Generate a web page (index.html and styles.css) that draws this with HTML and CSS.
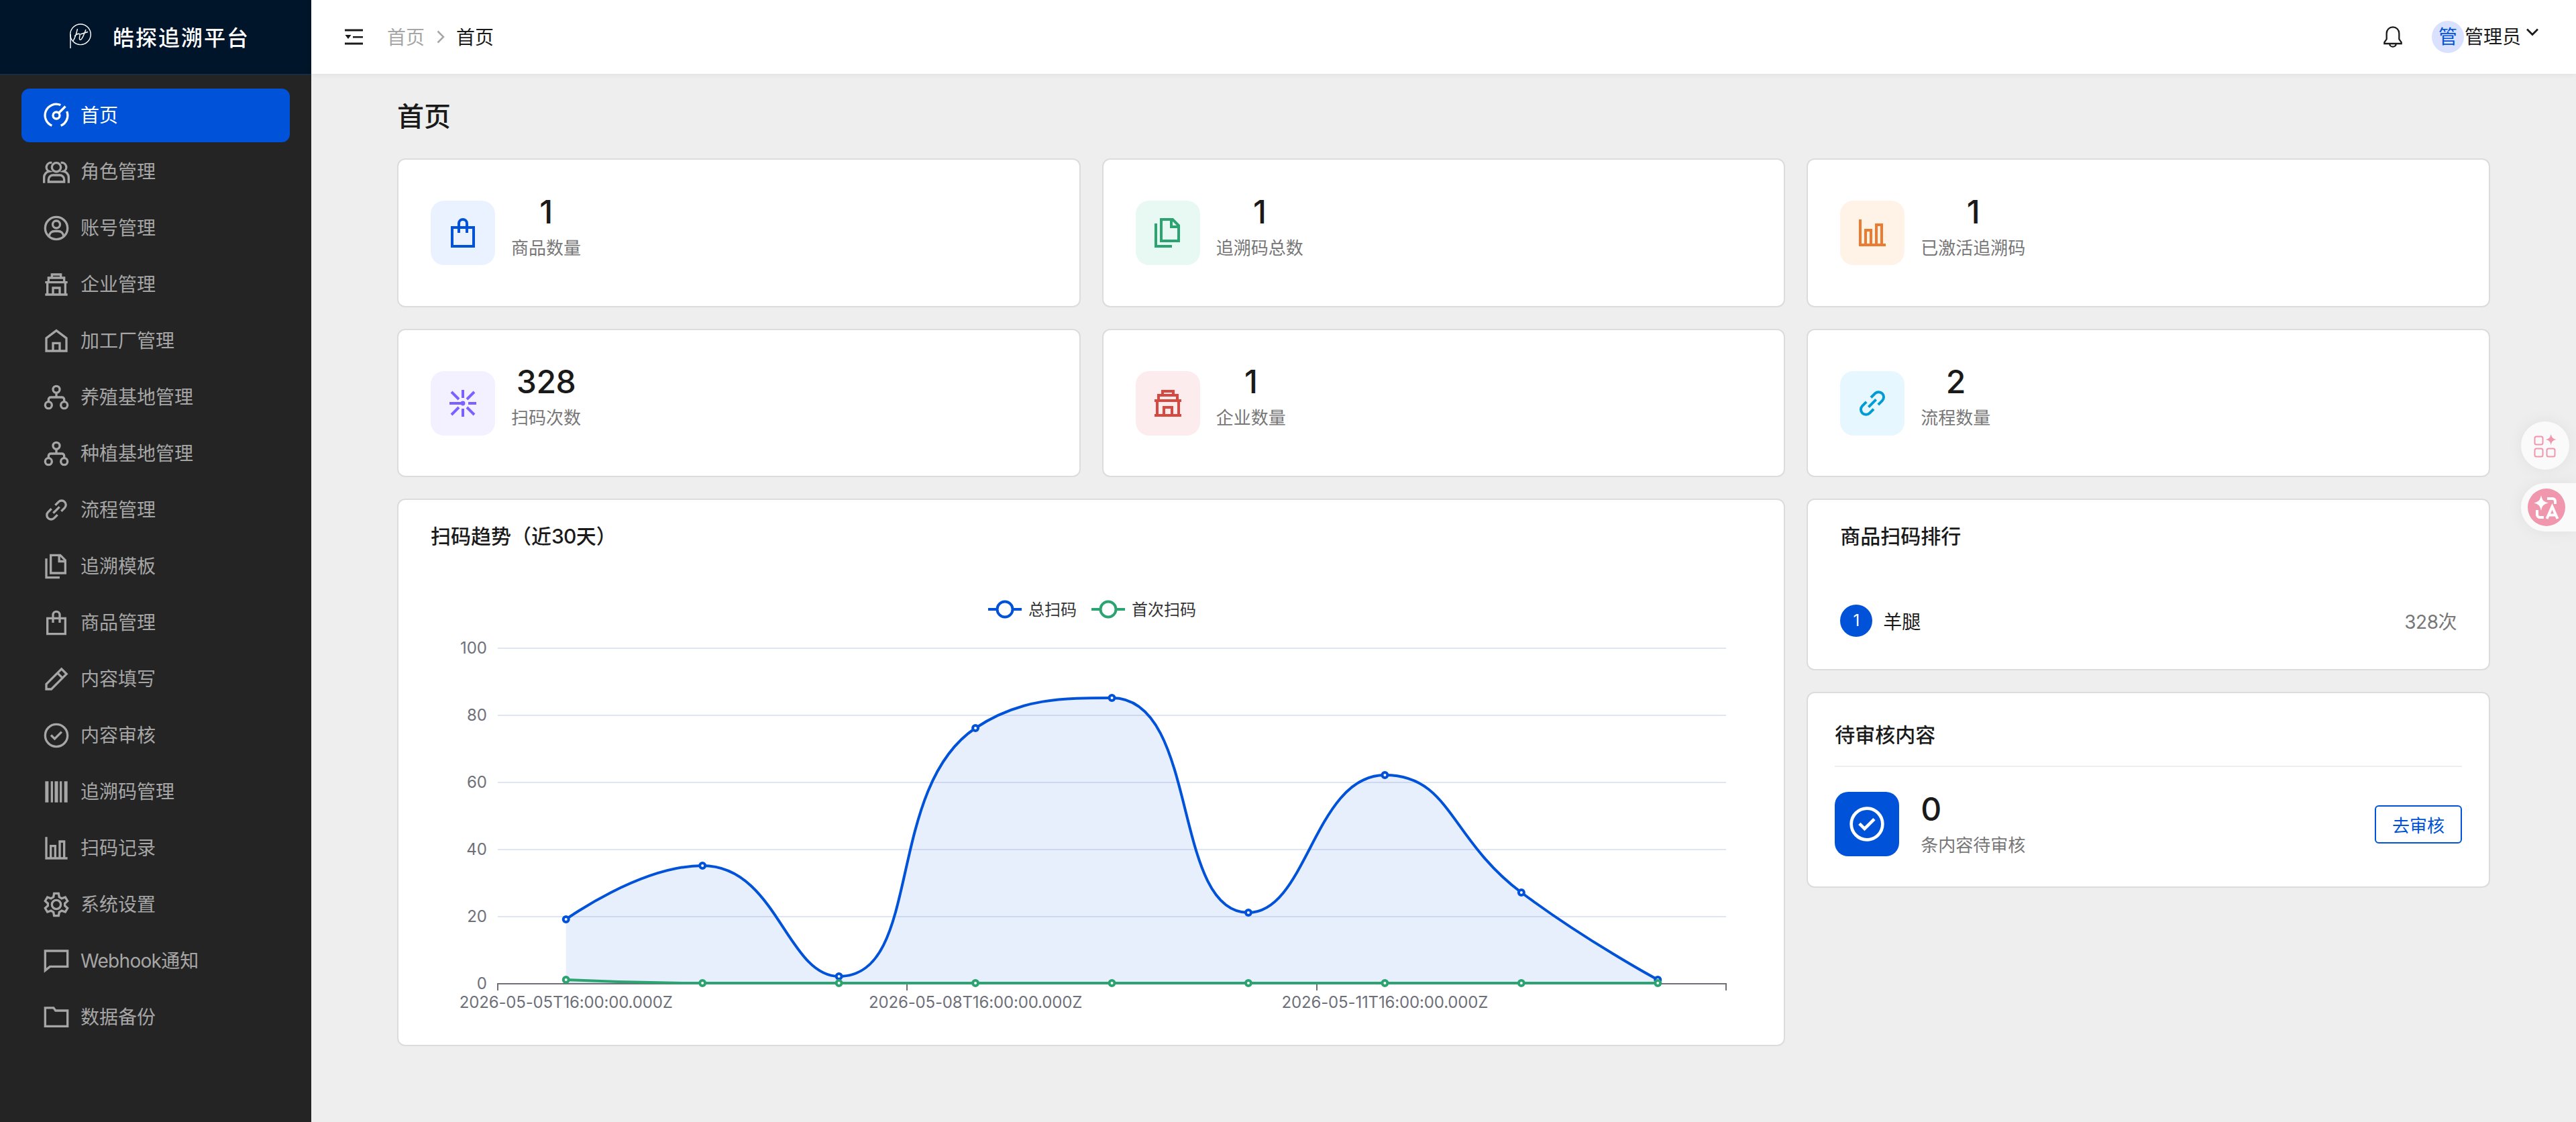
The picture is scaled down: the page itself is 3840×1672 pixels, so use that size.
FILE: index.html
```html
<!DOCTYPE html>
<html lang="zh-CN">
<head>
  <meta charset="UTF-8">
  <title>皓探追溯平台</title>
  <link rel="stylesheet" href="styles.css">
</head>
<body>

  <!-- 图标 -->
  <svg class="sprite" xmlns="http://www.w3.org/2000/svg">
    <symbol id="i-dashboard" viewBox="0 0 24 24"><path d="M8 21.2A10 10 0 0 1 15.8 2.7M21.4 8.4A10 10 0 0 1 16 21.2M14.1 9.9l6-6"/><circle cx="12" cy="12" r="3"/></symbol>
    <symbol id="i-users" viewBox="0 0 24 24"><circle cx="12" cy="8" r="4"/><path d="M5 21v-2a4 4 0 0 1 4-4h6a4 4 0 0 1 4 4v2zM8 4a4 4 0 0 0-2.400 7.600A5.500 5.500 0 0 0 1 17v5M16 4a4 4 0 0 1 2.400 7.600A5.500 5.500 0 0 1 23 17v5"/></symbol>
    <symbol id="i-user" viewBox="0 0 24 24"><circle cx="12" cy="12" r="10"/><circle cx="12" cy="8.700" r="3.300"/><path d="M5.500 19.400c.3-3 2.300-4.700 5-4.700h3c2.700 0 4.700 1.700 5 4.700"/></symbol>
    <symbol id="i-shop" viewBox="0 0 24 24"><path d="M8 6V3h8v3M5 10V6h14v4M2 10h20M4 10v11M20 10v11M2 21h20M9 21v-6h6v6"/></symbol>
    <symbol id="i-home" viewBox="0 0 24 24"><path d="M3 21V9.500L12 2.800l9 6.700V21zM9 21v-7h6v7"/></symbol>
    <symbol id="i-fork" viewBox="0 0 24 24"><circle cx="12" cy="5" r="3"/><circle cx="5" cy="19" r="3"/><circle cx="19" cy="19" r="3"/><path d="M12 8v4M5 16v-2a2 2 0 0 1 2-2h10a2 2 0 0 1 2 2v2"/></symbol>
    <symbol id="i-link" viewBox="0 0 24 24"><path d="M11 7.700l3-3a3.800 3.800 0 0 1 5.400 5.400l-3 3M13 16.300l-3 3a3.800 3.800 0 0 1-5.400-5.400l3-3M9.200 14.800l5.600-5.600"/></symbol>
    <symbol id="i-copy" viewBox="0 0 24 24"><path d="M7 2h8.500L20 6.500V18H7zM14.500 2v5.500H20M3 5v17h12"/></symbol>
    <symbol id="i-bag" viewBox="0 0 24 24"><path d="M4 8h16v14H4zM9 12V5a3 3 0 0 1 6 0v7"/></symbol>
    <symbol id="i-edit" viewBox="0 0 24 24"><path d="M3 16.500L16.600 2.900l4.500 4.500L7.500 21H3zM13 6.500l4.500 4.500"/></symbol>
    <symbol id="i-check" viewBox="0 0 24 24"><circle cx="12" cy="12" r="10"/><path d="M7.200 11.700l3.300 3.300 6.200-6.200"/></symbol>
    <symbol id="i-barcode" viewBox="0 0 24 24"><path class="solid" d="M2 2.500h3v19H2zM7 2.500h2v19H7zM10.500 2.500h3v19h-3zM15 2.500h2v19h-2zM19 2.500h3v19h-3z"/></symbol>
    <symbol id="i-bars" viewBox="0 0 24 24"><path d="M3 2v19h19M7 21V10h4v11M15 21V6h4v15"/></symbol>
    <symbol id="i-setting" viewBox="0 0 24 24"><circle cx="12" cy="12" r="4"/><path d="M10 2h4l.6 3.200 2.200 1.300 3.200-1.100 2 3.400L19.600 11v2l2.400 2.200-2 3.400-3.200-1.100-2.200 1.300L14 22h-4l-.6-3.200-2.200-1.300L4 18.600l-2-3.400L4.400 13v-2L2 8.800l2-3.400 3.200 1.100 2.200-1.300z"/></symbol>
    <symbol id="i-chat" viewBox="0 0 24 24"><path d="M2 3h20v14H6.300L2 20.500z"/></symbol>
    <symbol id="i-folder" viewBox="0 0 24 24"><path d="M2 3.500h7.500l1.800 2.500H22v14H2z"/></symbol>
    <symbol id="i-scan" viewBox="0 0 24 24"><path d="M12 2v6M12 16v6M2 12h9M16 12h6M3.500 3.500l5.500 5.500M15 15l5.500 5.500M20.500 3.500L15 9M9 15l-5.500 5.500"/><circle class="solid" cx="12" cy="12" r="1.700"/></symbol>
    <symbol id="i-bell" viewBox="0 0 24 24"><path d="M5 8a7 7 0 0 1 14 0v6.500l2.500 3.500v1.500h-19V18L5 14.500zM8.500 20a3.500 3 0 0 0 7 0"/></symbol>
  </svg>

  <div class="layout">
    <aside class="sidebar">
      <div class="logo">
        <svg class="logo-mark" viewBox="0 0 40 40"><circle cx="20" cy="17.300" r="15.300"/><path d="M5 17V38M15.500 9C14 16 12 22 9 27M11 20c4-4 7-4 8-3s-2 6 0 8 5-4 9-15M20 17l11-3.500"/></svg>
        <span class="logo-text">皓探追溯平台</span>
      </div>
      <nav class="menu">
        <a class="menu-item active"><svg class="icon"><use href="#i-dashboard"/></svg>首页</a>
        <a class="menu-item"><svg class="icon"><use href="#i-users"/></svg>角色管理</a>
        <a class="menu-item"><svg class="icon"><use href="#i-user"/></svg>账号管理</a>
        <a class="menu-item"><svg class="icon"><use href="#i-shop"/></svg>企业管理</a>
        <a class="menu-item"><svg class="icon"><use href="#i-home"/></svg>加工厂管理</a>
        <a class="menu-item"><svg class="icon"><use href="#i-fork"/></svg>养殖基地管理</a>
        <a class="menu-item"><svg class="icon"><use href="#i-fork"/></svg>种植基地管理</a>
        <a class="menu-item"><svg class="icon"><use href="#i-link"/></svg>流程管理</a>
        <a class="menu-item"><svg class="icon"><use href="#i-copy"/></svg>追溯模板</a>
        <a class="menu-item"><svg class="icon"><use href="#i-bag"/></svg>商品管理</a>
        <a class="menu-item"><svg class="icon"><use href="#i-edit"/></svg>内容填写</a>
        <a class="menu-item"><svg class="icon"><use href="#i-check"/></svg>内容审核</a>
        <a class="menu-item"><svg class="icon"><use href="#i-barcode"/></svg>追溯码管理</a>
        <a class="menu-item"><svg class="icon"><use href="#i-bars"/></svg>扫码记录</a>
        <a class="menu-item"><svg class="icon"><use href="#i-setting"/></svg>系统设置</a>
        <a class="menu-item"><svg class="icon"><use href="#i-chat"/></svg><span><span class="latin">Webhook</span>通知</span></a>
        <a class="menu-item"><svg class="icon"><use href="#i-folder"/></svg>数据备份</a>
      </nav>
    </aside>

    <div class="main">
      <header class="header">
        <svg class="collapse" viewBox="0 0 32 32"><path d="M2 4.500h27v3H2zM14 15h15v2.500H14zM2 24.500h27v3H2zM2.500 13h9L7 19z"/></svg>
        <div class="breadcrumb">
          <span class="crumb">首页</span>
          <svg class="crumb-sep" viewBox="0 0 12 20"><path d="M1.500 1.500L10 10l-8.500 8.500"/></svg>
          <span class="crumb current">首页</span>
        </div>
        <div class="header-right">
          <svg class="icon bell"><use href="#i-bell"/></svg>
          <span class="avatar">管</span>
          <span class="user-name">管理员</span>
          <svg class="caret" viewBox="0 0 18 12"><path d="M1 1.500l8 8 8-8"/></svg>
        </div>
      </header>

      <div class="content">
        <h1 class="page-title">首页</h1>

        <div class="grid">
          <div class="card stat">
            <div class="stat-icon blue"><svg class="icon"><use href="#i-bag"/></svg></div>
            <div class="stat-info"><div class="stat-value">1</div><div class="stat-label">商品数量</div></div>
          </div>
          <div class="card stat">
            <div class="stat-icon green"><svg class="icon"><use href="#i-copy"/></svg></div>
            <div class="stat-info"><div class="stat-value">1</div><div class="stat-label">追溯码总数</div></div>
          </div>
          <div class="card stat">
            <div class="stat-icon orange"><svg class="icon"><use href="#i-bars"/></svg></div>
            <div class="stat-info"><div class="stat-value">1</div><div class="stat-label">已激活追溯码</div></div>
          </div>
          <div class="card stat">
            <div class="stat-icon purple"><svg class="icon"><use href="#i-scan"/></svg></div>
            <div class="stat-info"><div class="stat-value">328</div><div class="stat-label">扫码次数</div></div>
          </div>
          <div class="card stat">
            <div class="stat-icon red"><svg class="icon"><use href="#i-shop"/></svg></div>
            <div class="stat-info"><div class="stat-value">1</div><div class="stat-label">企业数量</div></div>
          </div>
          <div class="card stat">
            <div class="stat-icon cyan"><svg class="icon"><use href="#i-link"/></svg></div>
            <div class="stat-info"><div class="stat-value">2</div><div class="stat-label">流程数量</div></div>
          </div>

          <div class="card trend">
            <h2 class="card-title">扫码趋势（近<span class="latin">30</span>天）</h2>
            <svg id="chart" class="chart" viewBox="0 0 1970 640" width="1970" height="640"></svg>
          </div>

          <div class="side">
            <div class="card rank">
              <h2 class="card-title">商品扫码排行</h2>
              <div class="rank-item">
                <span class="rank-no">1</span>
                <span class="rank-name">羊腿</span>
                <span class="rank-count">328次</span>
              </div>
            </div>
            <div class="card pending">
              <h2 class="card-title">待审核内容</h2>
              <div class="pending-body">
                <div class="pending-icon"><svg class="icon"><use href="#i-check"/></svg></div>
                <div class="pending-info">
                  <div class="pending-value">0</div>
                  <div class="pending-label">条内容待审核</div>
                </div>
                <button class="btn">去审核</button>
              </div>
            </div>
          </div>
        </div>
      </div>
    </div>
  </div>

  <!-- 右侧悬浮按钮 -->
  <div class="float-tools">
    <div class="float-btn">
      <svg class="float-apps" viewBox="0 0 36 36"><rect x="2.500" y="4.500" width="12" height="12" rx="2.500"/><rect x="2.500" y="22.500" width="12" height="12" rx="2.500"/><rect x="20.500" y="22.500" width="12" height="12" rx="2.500"/><path d="M26.700 1c1.300 5.300 2.500 6.600 8 8-5.500 1.400-6.700 2.700-8 8-1.300-5.300-2.500-6.600-8-8 5.500-1.400 6.700-2.700 8-8z"/></svg>
    </div>
    <div class="float-btn float-dock">
      <svg class="float-translate" viewBox="0 0 56 56"><circle cx="28" cy="28" r="28"/><path class="star" d="M20 10c2 8 3.500 9.500 11 11.500-7.500 2-9 3.500-11 11.500-2-8-3.500-9.500-11-11.500 7.500-2 9-3.500 11-11.500z"/><path class="line" d="M29 15h8a4 4 0 0 1 4 4v4M14 32v7a4 4 0 0 0 4 4h6M28.500 45l8-18 8 18M31.500 39.500h10"/></svg>
    </div>
  </div>

  <script>
    const chart = document.getElementById('chart');
    const total = [19, 35, 2, 76, 85, 21, 62, 27, 1];
    const first = [1, 0, 0, 0, 0, 0, 0, 0, 0];
    const labels = { 0: '2026-05-05T16:00:00.000Z', 3: '2026-05-08T16:00:00.000Z', 6: '2026-05-11T16:00:00.000Z' };
    const left = 100, right = 1931, base = 596, band = (right - left) / total.length;

    const toPoints = data => data.map((v, i) => [left + band * (i + 0.5), base - v * 5]);
    const clamp = (v, a, b) => Math.max(Math.min(a, b), Math.min(Math.max(a, b), v));

    // 平滑曲线，控制点限制在相邻点之间
    function smoothPath(pts) {
      let d = `M${pts[0]}`;
      let cp0 = pts[0];
      for (let i = 1; i < pts.length; i++) {
        const p = pts[i], prev = pts[i - 1], next = pts[i + 1];
        let cp1 = p, nextCp = p;
        if (next) {
          const lenPrev = Math.hypot(p[0] - prev[0], p[1] - prev[1]);
          const lenNext = Math.hypot(next[0] - p[0], next[1] - p[1]);
          const ratio = lenNext / (lenNext + lenPrev);
          nextCp = p.map((v, k) => clamp(v + (next[k] - prev[k]) * 0.5 * ratio, v, next[k]));
          cp1 = p.map((v, k) => clamp(v - (nextCp[k] - v) * lenPrev / lenNext, v, prev[k]));
          nextCp = p.map((v, k) => v + (v - cp1[k]) * lenNext / lenPrev);
        }
        d += `C${cp0} ${cp1} ${p}`;
        cp0 = nextCp;
      }
      return d;
    }

    function series(data, name) {
      const pts = toPoints(data);
      const line = smoothPath(pts);
      const end = pts[pts.length - 1][0];
      return `<path class="area ${name}" d="${line}L${end} ${base}L${pts[0][0]} ${base}Z"/>
        <path class="line ${name}" d="${line}"/>` +
        pts.map(p => `<circle class="dot ${name}" cx="${p[0]}" cy="${p[1]}" r="4"/>`).join('');
    }

    let html = '';
    for (let v = 0; v <= 100; v += 20) {
      const y = base + 1 - v * 5;
      html += `<path class="${v ? 'split' : 'axis'}" d="M${left} ${y}H${right}"/>
        <text class="tick-y" x="84" y="${y + 8}">${v}</text>`;
    }
    for (let i = 0; i <= 9; i += 3) {
      html += `<path class="axis" d="M${Math.round(left + band * i)} ${base}v11"/>`;
    }
    for (const i in labels) {
      html += `<text class="tick-x" x="${left + band * (+i + 0.5)}" y="633">${labels[i]}</text>`;
    }
    html += series(total, 'total') + series(first, 'first');

    // 图例
    [['总扫码', 'total', 831], ['首次扫码', 'first', 985]].forEach(([text, name, x]) => {
      html += `<path class="line ${name}" d="M${x} 39h50"/>
        <circle class="dot ${name}" cx="${x + 25}" cy="39" r="11.500"/>
        <text class="legend" x="${x + 60}" y="48">${text}</text>`;
    });
    chart.innerHTML = html;
  </script>

</body>
</html>
```
FILE: styles.css
```css
* { box-sizing: border-box; }
body { margin: 0; font-family: Inter, "Noto Sans CJK SC", sans-serif; font-size: 28px; color: #1a1a1a; background: #eee; }
h1, h2 { margin: 0; font-weight: 500; }
.sprite { display: none; }
.icon { width: 40px; height: 40px; fill: none; stroke: currentColor; stroke-width: 2; flex: none; }
.solid { fill: currentColor; stroke: none; }

.layout { display: flex; height: 1672px; }

/* 侧边栏 */
.sidebar { width: 464px; flex: none; background: #242424; }
.logo { height: 112px; display: flex; align-items: center; padding: 0 0 2px 100px; background: #001529; border-bottom: 2px solid #1a2c3e; }
.logo-mark { width: 40px; height: 40px; margin-right: 28px; fill: none; stroke: #fff; stroke-width: 1.4; }
.logo-text { color: #fff; font-size: 32px; font-weight: 500; letter-spacing: 2px; }
.menu { padding: 20px 32px; display: flex; flex-direction: column; gap: 4px; }
.menu-item { height: 80px; padding: 0 32px; display: flex; align-items: center; gap: 16px; border-radius: 12px; color: #a6a6a6; line-height: 40px; }
.menu-item.active { background: #0052d9; color: #fff; }
.latin { letter-spacing: -0.7px; }

/* 顶栏 */
.main { flex: 1; min-width: 0; }
.header { height: 110px; display: flex; align-items: center; padding: 0 56px 0 48px; background: #fff; box-shadow: 0 2px 8px rgba(0,0,0,0.06); }
.collapse { width: 32px; height: 32px; fill: #1a1a1a; }
.breadcrumb { display: flex; align-items: center; margin-left: 33px; padding-bottom: 2px; }
.crumb { color: #a6a6a6; }
.crumb.current { color: #1a1a1a; }
.crumb-sep { width: 12px; height: 20px; margin: 2px 17px 0 18px; fill: none; stroke: #a6a6a6; stroke-width: 2.5; }
.header-right { display: flex; align-items: center; margin-left: auto; }
.bell { width: 32px; height: 32px; stroke-width: 1.7; margin-right: 42px; }
.avatar { width: 48px; height: 48px; border-radius: 50%; background: #d9e1ff; color: #0052d9; text-align: center; line-height: 48px; }
.user-name { margin-left: 1px; line-height: 40px; }
.caret { width: 18px; height: 12px; margin: 0 0 14px 8px; fill: none; stroke: #1a1a1a; stroke-width: 2.7; }

/* 内容区 */
.content { padding: 34px 128px 0; }
.page-title { font-size: 40px; line-height: 60px; margin-bottom: 32px; }
.grid { display: grid; grid-template-columns: repeat(3, 1fr); grid-template-rows: 222px 221px; column-gap: 32px; row-gap: 32px; }
.card { background: #fff; border: 2px solid #dcdcdc; border-radius: 12px; padding: 0 48px; }
.card-title { font-size: 30px; line-height: 44px; }

.stat { display: flex; align-items: center; gap: 24px; }
.stat-icon { width: 96px; height: 96px; border-radius: 20px; display: flex; align-items: center; justify-content: center; }
.stat-icon .icon { width: 48px; height: 48px; }
.stat-icon.blue { background: #ebf2ff; color: #0052d9; }
.stat-icon.green { background: #e8f8f2; color: #2ba471; }
.stat-icon.orange { background: #fff3e8; color: #ed7b2f; }
.stat-icon.purple { background: #f3f0ff; color: #7b61ff; }
.stat-icon.red { background: #fdecee; color: #d54941; }
.stat-icon.cyan { background: #e6f7ff; color: #029cd4; }
.stat-info { text-align: center; margin-bottom: 21px; }
.stat-value { font-size: 48px; font-weight: 500; line-height: 64px; letter-spacing: -0.5px; }
.stat-label { font-size: 26px; line-height: 40px; color: #777; margin-top: 2px; }

.trend { grid-column: span 2; height: 816px; padding-top: 32px; }
.chart { display: block; margin-top: 48px; }
.chart text { font-size: 24px; fill: #6e7079; }
.chart .tick-y { text-anchor: end; }
.chart .tick-x { text-anchor: middle; letter-spacing: -0.15px; }
.chart .legend { fill: #333; }
.split, .axis { fill: none; stroke: #e0e6f1; stroke-width: 2; }
.axis { stroke: #6e7079; }
.line { fill: none; stroke-width: 4; }
.line.total, .dot.total { stroke: #0052d9; }
.line.first, .dot.first { stroke: #2ba471; }
.dot { fill: #fff; stroke-width: 4; }
.area { opacity: 0.09; }
.area.total { fill: #0052d9; }
.area.first { fill: #2ba471; }

.side { display: flex; flex-direction: column; gap: 32px; }
.rank { height: 256px; padding-top: 32px; }
.rank-item { display: flex; align-items: center; margin-top: 80px; height: 48px; }
.rank-no { width: 48px; height: 48px; border-radius: 50%; background: #0052d9; color: #fff; font-size: 24px; line-height: 48px; text-align: center; }
.rank-name { margin-left: 16px; }
.rank-count { margin-left: auto; font-size: 28px; color: #777; letter-spacing: -0.5px; }
.pending { height: 292px; padding: 40px 40px 0; }
.pending .card-title { padding-bottom: 24px; border-bottom: 2px solid #eee; }
.pending-body { display: flex; align-items: center; margin-top: 33px; }
.pending-icon { width: 96px; height: 96px; border-radius: 20px; background: #0052d9; color: #fff; display: flex; align-items: center; justify-content: center; }
.pending-icon .icon { width: 56px; height: 56px; }
.pending-info { margin-left: 32px; }
.pending-value { font-size: 48px; font-weight: 500; line-height: 60px; }
.pending-label { font-size: 26px; line-height: 40px; color: #777; margin-top: 4px; }
.btn { margin-left: auto; width: 130px; height: 57px; padding: 0; border: 2px solid #0052d9; border-radius: 6px; background: #fff; color: #0052d9; font-family: inherit; font-size: 26px; }

/* 悬浮按钮 */
.float-tools { position: fixed; right: 0; top: 628px; width: 82px; display: flex; flex-direction: column; gap: 20px; }
.float-btn { width: 72px; height: 72px; border-radius: 36px; background: #fafafa; box-shadow: 0 0 24px rgba(0,0,0,0.06); display: flex; align-items: center; justify-content: center; }
.float-dock { width: 82px; border-radius: 36px 0 0 36px; justify-content: flex-start; padding-left: 10px; }
.float-apps { width: 36px; height: 36px; fill: #f096ad; }
.float-apps rect { fill: none; stroke: #f096ad; stroke-width: 2; }
.float-translate { width: 56px; height: 56px; fill: #f096ad; }
.float-translate .star { fill: #fff; }
.float-translate .line { fill: none; stroke: #fff; stroke-width: 4; }
```
